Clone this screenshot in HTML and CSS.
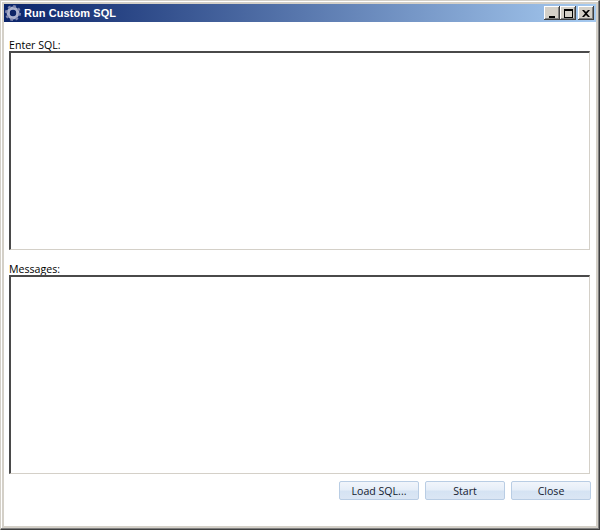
FILE: index.html
```html
<!DOCTYPE html>
<html lang="en">
<head>
<meta charset="utf-8">
<title>Run Custom SQL</title>
<link rel="stylesheet" href="styles.css">
</head>
<body>
<div class="window">
  <header class="titlebar">
    <svg class="app-icon" width="16" height="16" viewBox="0 0 16 16" aria-hidden="true">
      <circle cx="8" cy="8" r="4.8" fill="none" stroke="#aab0cc" stroke-width="3.200"/>
      <circle cx="8" cy="8" r="6.8" fill="none" stroke="#7f86ae" stroke-width="2.400" stroke-dasharray="2.700 2.640"/>
      <circle cx="8" cy="8" r="2.800" fill="#0f2566"/>
    </svg>
    <span class="title">Run Custom SQL</span>
    <div class="controls">
      <button class="ctl" type="button" aria-label="Minimize"><svg width="9" height="9" viewBox="0 0 9 9"><rect x="1" y="7" width="6" height="2" fill="#000"/></svg></button>
      <button class="ctl" type="button" aria-label="Maximize"><svg width="9" height="9" viewBox="0 0 9 9"><path d="M0 0h9v9h-9zM1 2v6h7v-6z" fill="#000" fill-rule="evenodd"/></svg></button>
      <button class="ctl ctl-close" type="button" aria-label="Close"><svg width="8" height="7" viewBox="0 0 8 7"><path d="M0 0h2l2 2 2-2h2l-3 3.500 3 3.500h-2l-2-2-2 2h-2l3-3.500z" fill="#000"/></svg></button>
    </div>
  </header>
  <main class="client">
    <label class="field-label">Enter SQL:</label>
    <textarea class="box"></textarea>
    <label class="field-label field-second">Messages:</label>
    <textarea class="box"></textarea>
    <div class="actions">
      <button class="btn" type="button">Load SQL...</button>
      <button class="btn" type="button">Start</button>
      <button class="btn" type="button">Close</button>
    </div>
  </main>
</div>
</body>
</html>
```
FILE: styles.css
```css
* { box-sizing: border-box; }
html, body { margin: 0; padding: 0; }
body { width: 600px; height: 530px; overflow: hidden; background: #d4d0c8; font-family: "Open Sans", sans-serif; }
.window {
  width: 600px; height: 530px; display: flex; flex-direction: column;
  background: #d4d0c8;
  border-style: solid; border-width: 1px;
  border-color: #d4d0c8 #404040 #404040 #d4d0c8;
  box-shadow: inset -1px -1px 0 #808080, inset 1px 1px 0 #fff;
  padding: 3px;
}
.titlebar {
  height: 18px; flex: none; display: flex; align-items: center; padding: 0 2px 0 1px;
  background: linear-gradient(90deg, #0a246a 0%, #a6caf0 100%);
}
.app-icon { flex: none; }
.title { margin-left: 3px; color: #fff; font: bold 11px "Liberation Sans", Arial, sans-serif; letter-spacing: 0.08px; white-space: nowrap; }
.controls { margin-left: auto; display: flex; }
.ctl {
  width: 16px; height: 14px; padding: 0; display: flex; align-items: center; justify-content: center;
  background: #d4d0c8; border: 0; box-shadow: inset -1px -1px 0 #404040, inset 1px 1px 0 #fff, inset -2px -2px 0 #808080;
}
.ctl-close { margin-left: 2px; }
.client { flex: 1; min-height: 0; background: #fff; display: flex; flex-direction: column; padding: 17px 5px 0 5px; }
.field-label { height: 12px; flex: none; font: 10.6px/12px "Open Sans", "Liberation Sans", sans-serif; color: #000; }
.field-second { margin-top: 13px; }
.box {
  display: block; width: 581px; height: 199px; flex: none; resize: none; outline: 0; padding: 0; margin: 0; background: #fff;
  border-style: solid; border-width: 2px 1px 1px 2px; border-color: #4a4a4a #d4d0c8 #d4d0c8 #4a4a4a;
}
.actions { display: flex; justify-content: flex-end; gap: 6px; margin-top: 7px; width: 582px; }
.btn {
  width: 80px; height: 19px; padding: 0; border: 1px solid #b9cde4; border-radius: 2px; color: #15202e;
  font: 10.6px "Open Sans", "Liberation Sans", sans-serif;
  background: linear-gradient(180deg, #f1f5fb 0%, #e6eef8 45%, #d5e3f3 55%, #dbe6f4 100%);
}
```
